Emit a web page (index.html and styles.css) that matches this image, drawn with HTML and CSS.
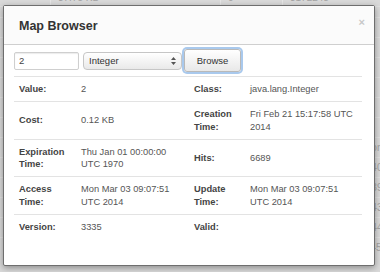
FILE: index.html
```html
<!DOCTYPE html>
<html lang="en">
<head>
  <meta charset="UTF-8" />
  <title>Map Browser</title>
  <link rel="stylesheet" href="styles.css">
</head>
<body>
  <div class="page">
    <div class="bg-row first">
      <span></span><span>37.75 KB</span><span>0</span><span>3172248</span>
    </div>
    <div class="bg-row spacer"></div>
    <div class="bg-row mid"><span></span><span></span></div>
    <div class="bg-row mid"><span></span><span></span></div>
    <div class="bg-row mid"><span></span><span></span></div>
    <div class="bg-row mid"><span></span><span></span></div>
    <div class="bg-row mid"><span></span><span></span></div>
    <div class="bg-row mid"><span></span><span></span></div>
    <div class="bg-row mid"><span></span><span>Mon</span></div>
    <div class="bg-row mid"><span></span><span>1.40</span></div>
    <div class="bg-row mid"><span></span><span>1.39</span></div>
    <div class="bg-row mid"><span></span><span>1.43</span></div>
    <div class="bg-row mid"><span></span><span>1.44</span></div>
    <div class="bg-row last">
      <span></span><span>0.88 ms</span><span>0</span><span>1.36 ms</span><span>1.45</span>
    </div>
  </div>

  <div class="modal">
    <div class="modal-header">
      <h3>Map Browser</h3>
      <span class="close">&times;</span>
    </div>
    <div class="modal-body">
      <form class="browse-form">
        <input class="key-input" type="text" value="2">
        <div class="select-wrap">
          <span>Integer</span>
          <svg class="arrows" width="5" height="8" viewBox="0 0 5 8">
            <path d="M2.5 0 L5 3 L0 3 Z M2.5 8 L5 5 L0 5 Z" fill="#555"/>
          </svg>
        </div>
        <button class="btn" type="button">Browse</button>
      </form>

      <div class="details">
        <div class="row">
          <div class="label">Value:</div><div class="value">2</div>
          <div class="label">Class:</div><div class="value">java.lang.Integer</div>
        </div>
        <div class="row">
          <div class="label">Cost:</div><div class="value">0.12 KB</div>
          <div class="label">Creation Time:</div><div class="value">Fri Feb 21 15:17:58 UTC 2014</div>
        </div>
        <div class="row">
          <div class="label">Expiration Time:</div><div class="value">Thu Jan 01 00:00:00 UTC 1970</div>
          <div class="label">Hits:</div><div class="value">6689</div>
        </div>
        <div class="row">
          <div class="label">Access Time:</div><div class="value">Mon Mar 03 09:07:51 UTC 2014</div>
          <div class="label">Update Time:</div><div class="value">Mon Mar 03 09:07:51 UTC 2014</div>
        </div>
        <div class="row last">
          <div class="label">Version:</div><div class="value">3335</div>
          <div class="label">Valid:</div><div class="value"></div>
        </div>
      </div>
    </div>
  </div>
</body>
</html>
```

FILE: styles.css
```css
body {
  margin: 0;
  background: #d9d9d9;
  font-family: 'Liberation Sans', Arial, sans-serif;
  overflow: hidden;
  height: 272px;
}

/* page behind the dialog */
.page {
  margin-top: -11px;
  color: #a3a3a3;
  font-size: 10px;
}
.bg-row {
  display: grid;
  grid-template-columns: 50px 170px 62px 1fr;
  height: 20px;
  line-height: 20px;
  border-bottom: 1px solid #e2e2e2;
  box-sizing: border-box;
}
.bg-row span {
  white-space: nowrap;
  overflow: hidden;
}
.bg-row.first {
  height: 18px;
  line-height: 18px;
}
.bg-row.first span + span {
  border-left: 1px solid #e6e6e6;
  padding-left: 7px;
}
.bg-row.spacer {
  height: 11px;
}
.bg-row.mid {
  grid-template-columns: 362px 1fr;
}
.bg-row.mid span + span {
  border-left: 1px solid #e6e6e6;
}
.bg-row.last {
  grid-template-columns: 33px 95px 134px 100px 1fr;
  border-bottom: none;
}

/* dialog */
.modal {
  position: absolute;
  left: 3px;
  top: 5px;
  width: 372px;
  height: 261px;
  box-sizing: border-box;
  background: #fff;
  border: 1px solid #6e6e6e;
  border-radius: 2px;
  box-shadow: 0 2px 6px rgba(0, 0, 0, 0.35);
  color: #333;
}
.modal-header {
  display: flex;
  justify-content: space-between;
  align-items: center;
  height: 38px;
  padding: 0 9px 0 15px;
  background: #fbfbfb;
  border-bottom: 1px solid #cfcfcf;
}
.modal-header h3 {
  margin: 0;
  font-size: 12.5px;
  font-weight: bold;
  color: #333;
  padding-top: 2px;
}
.close {
  color: #c8c8c8;
  font-size: 11px;
  font-weight: bold;
  margin-top: -6px;
}
.modal-body {
  padding: 0 12px 0 10px;
}

.browse-form {
  display: flex;
  align-items: center;
  gap: 4px;
  height: 31px;
  border-bottom: 1px solid #e3e3e3;
}
.key-input {
  width: 65px;
  height: 18px;
  box-sizing: border-box;
  border: 1px solid #cfcfcf;
  border-radius: 2px;
  box-shadow: inset 0 1px 1px rgba(0, 0, 0, 0.08);
  padding: 0 4px;
  font-family: inherit;
  font-size: 9.5px;
  color: #444;
}
.select-wrap {
  position: relative;
  display: flex;
  align-items: center;
  width: 99px;
  height: 18px;
  box-sizing: border-box;
  border: 1px solid #c6c6c6;
  border-radius: 4px;
  background: linear-gradient(#ffffff, #e9e9e9);
  padding-left: 5px;
  font-size: 9.5px;
  color: #333;
}
.arrows {
  position: absolute;
  right: 5px;
  top: 4px;
}
.btn {
  width: 57px;
  height: 23px;
  box-sizing: border-box;
  margin-left: -2px;
  border: 1px solid #b9b9b9;
  border-radius: 3px;
  background: linear-gradient(#ffffff, #e8e8e8);
  box-shadow: 0 0 0 2px #a9c9ed;
  font-family: inherit;
  font-size: 9.5px;
  color: #333;
  padding: 0;
}

.details {
  color: #555;
  font-size: 9.3px;
  line-height: 12.3px;
}
.row {
  display: grid;
  grid-template-columns: 67px 107px 62px 1fr;
  align-items: center;
  padding: 6px 0;
  border-bottom: 1px solid #e3e3e3;
}
.row.last {
  border-bottom: none;
}
.label {
  padding-left: 5px;
  padding-right: 14px;
  font-weight: bold;
  color: #444;
}
.row .label:nth-child(3) {
  padding-left: 6px;
  padding-right: 10px;
}
.value {
  padding-right: 2px;
}
```
